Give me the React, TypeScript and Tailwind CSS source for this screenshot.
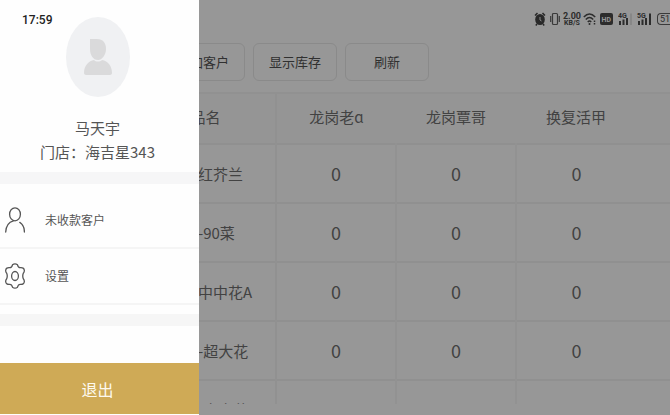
import React from 'react';

interface Product {
  name: string;
  counts: number[];
}

const customers = ['龙岗老ɑ', '龙岗覃哥', '换复活甲'];

const products: Product[] = [
  { name: '红芥兰', counts: [0, 0, 0] },
  { name: '-90菜', counts: [0, 0, 0] },
  { name: '中中花A', counts: [0, 0, 0] },
  { name: '-超大花', counts: [0, 0, 0] },
  { name: '-中中花', counts: [0, 0, 0] },
];

const actions = ['添加客户', '显示库存', '刷新'];

const AvatarIcon = () => (
  <svg viewBox="0 0 64 80" className="w-16 h-20" aria-hidden="true">
    <ellipse cx="32" cy="40" rx="32" ry="40" fill="#f0f1f3" />
    <path
      d="M24 22h7c6 0 9 4 9 10 0 6-4 11-8 11-5 0-8-5-8-11z M18 56c0-8 5-12 10-13 2 2 6 2 8 0 6 1 10 6 10 13 0 1-1 2-2 2H20c-1 0-2-1-2-2z"
      fill="#dadadb"
    />
  </svg>
);

const PersonIcon = () => (
  <svg viewBox="0 0 20 26" className="w-5 h-[26px]" fill="none" stroke="#555" strokeWidth="1.3" strokeLinecap="round" aria-hidden="true">
    <ellipse cx="10" cy="7.3" rx="5.4" ry="6.5" />
    <path d="M8.4 13.8C4 15 1 19 .7 25M14.8 15.4C17.7 17.3 19.4 21 19.4 25" />
  </svg>
);

const GearIcon = () => (
  <svg viewBox="0 0 20 26" className="w-5 h-[26px]" fill="none" stroke="#555" strokeWidth="1.3" strokeLinejoin="round" aria-hidden="true">
    <path d="M7.5 1.8Q10 -.2 12.5 1.8Q13.2 4.7 15.2 4.7Q19 4.3 19.3 7.2Q19.5 9 18.3 10.3Q17.2 13 18.3 15.7Q19.5 17 19.3 18.8Q19 21.7 15.2 21.3Q13.2 21.3 12.5 24.2Q10 26.2 7.5 24.2Q6.8 21.3 4.8 21.3Q1 21.7 .7 18.8Q.5 17 1.7 15.7Q2.8 13 1.7 10.3Q.5 9 .7 7.2Q1 4.3 4.8 4.7Q6.8 4.7 7.5 1.8z" />
    <ellipse cx="10" cy="13" rx="3.4" ry="4.5" />
  </svg>
);

const AlarmIcon = () => (
  <svg viewBox="0 0 12 14" className="w-3 h-3.5 shrink-0" aria-hidden="true">
    <ellipse cx="6" cy="7.5" rx="4.8" ry="5.5" fill="#292929" />
    <path d="M1 3.5 3.5 1M11 3.5 8.5 1M3 12l-1.2 1.5M9 12l1.2 1.5" stroke="#292929" strokeWidth="1.5" />
    <path d="M6 5V8l1.5 1" stroke="#979797" strokeWidth=".9" fill="none" />
  </svg>
);

const VibrateIcon = () => (
  <svg viewBox="0 0 12 14" className="w-3 h-3.5 shrink-0" fill="none" stroke="#3a3a3a" strokeWidth="1.2" aria-hidden="true">
    <rect x="3.5" y="1.5" width="5" height="11" rx="1" />
    <path d="M1.7 4v6M10.3 4v6" />
  </svg>
);

const WifiIcon = () => (
  <svg viewBox="0 0 14 14" className="w-3.5 h-3.5 shrink-0" fill="none" stroke="#2c2c2c" strokeWidth="1.5" aria-hidden="true">
    <path d="M.8 5Q6.5-1 12.2 5M2.8 7.5Q6.5 3.5 10.2 7.5M4.8 10Q6.5 8 8.2 10" />
    <circle cx="6.5" cy="12" r="1" fill="#2c2c2c" stroke="none" />
    <path d="M11.5 8.5v4" strokeDasharray="1.5 1" />
  </svg>
);

const Signal = ({ label, full }: { label: string; full: boolean }) => (
  <svg viewBox="0 0 15 14" className="w-[15px] h-3.5 shrink-0" fill="#2c2c2c" aria-hidden="true">
    <text x="0" y="6" fontSize="7" fontWeight="700" fontFamily="Roboto, sans-serif">{label}</text>
    <path d="M1 9h2v4H1zM4.5 7.5h2V13h-2zM8 6h2v7H8z" />
    <path d="M12 1.5h2V13h-2z" opacity={full ? 1 : 0.15} />
  </svg>
);

const StatusIcons = () => (
  <div className="flex h-[38px] shrink-0 items-center justify-end gap-[3px] overflow-hidden font-[Roboto,sans-serif] text-[#2c2c2c]">
    <AlarmIcon />
    <VibrateIcon />
    <div className="-mx-px flex flex-col items-center font-bold">
      <span className="text-[9px] leading-[8px]">2.00</span>
      <span className="text-[7px] leading-[7px]">KB/S</span>
    </div>
    <WifiIcon />
    <svg viewBox="0 0 13 12" className="w-[13px] h-3 shrink-0" aria-hidden="true">
      <rect width="13" height="12" rx="2" fill="#2c2c2c" />
      <text x="1.5" y="8.5" fontSize="7" fontWeight="700" fill="#979797" fontFamily="Roboto, sans-serif">HD</text>
    </svg>
    <div className="flex gap-1 px-0.5">
      <Signal label="4G" full={false} />
      <Signal label="5G" full />
    </div>
    <div className="h-3 w-[13px] shrink-0 overflow-hidden rounded-l border border-r-0 border-[#3a3a3a] pl-0.5 text-[9px] leading-[10px]">51</div>
  </div>
);

const Drawer = () => (
  <aside className="absolute inset-y-0 left-0 flex w-[199px] flex-col bg-[#fefefe] text-[#555]">
    <time className="absolute left-[22px] top-3 font-[Roboto,sans-serif] text-xs leading-4 font-medium text-[#222]">17:59</time>
    <div className="flex h-[172px] shrink-0 flex-col items-center pr-1 pt-[17px] text-[15px] leading-6">
      <AvatarIcon />
      <p className="mt-[19px]">马天宇</p>
      <p>门店：海吉星343</p>
    </div>
    <div className="h-3 shrink-0 bg-[#f6f6f7]" />
    <nav className="flex flex-col pt-[9px] text-xs">
      <button className="flex h-14 items-center gap-5 border-b-2 border-[#f5f5f5] pl-[5px]">
        <PersonIcon />
        未收款客户
      </button>
      <button className="flex h-14 items-center gap-5 border-b-2 border-[#f5f5f5] pl-[5px]">
        <GearIcon />
        设置
      </button>
    </nav>
    <div className="mt-[9px] h-3 shrink-0 bg-[#f6f6f6]" />
    <button className="mb-px mt-auto h-[51px] shrink-0 bg-[#cfaa56] pr-1 text-base text-[#fdf9ee]">退出</button>
  </aside>
);

const StockTable = () => (
  <div className="min-h-0 flex-1 overflow-hidden border-t-2 border-[#919191]">
    <table className="w-full table-fixed border-collapse text-[15px] leading-6 text-[#424242]">
      <thead>
        <tr className="h-[50px] border-b-2 border-[#909090] bg-[#959595]">
          <th className="w-[276px] border-r-2 border-[#919191] pb-1 pl-[136px] font-normal">品名</th>
          {customers.map((customer) => (
            <th key={customer} className="w-[120px] pb-1 font-normal">{customer}</th>
          ))}
          <th aria-hidden="true" />
        </tr>
      </thead>
      <tbody>
        {products.map((product) => (
          <tr key={product.name} className="h-[59px] border-b-2 border-[#909090]">
            <td className="border-r-2 border-[#919191] pl-[198px] whitespace-nowrap">{product.name}</td>
            {product.counts.map((count, i) => (
              <td key={customers[i]} className="border-r-2 border-[#929292] pb-0.5 text-center text-lg leading-6 last-of-type:border-r-0">{count}</td>
            ))}
          </tr>
        ))}
      </tbody>
    </table>
  </div>
);

export default function App() {
  return (
    <div className="relative flex h-screen flex-col overflow-hidden bg-[#979797] pb-[11px] font-['Noto_Sans_CJK_SC',sans-serif]">
      <StatusIcons />
      <div className="flex shrink-0 gap-2 pb-[11px] pl-[161px] pt-[5px]">
        {actions.map((action) => (
          <button key={action} className="h-[38px] w-[84px] rounded-md border border-[#8a8a8a] text-[13px] text-[#303030]">
            {action}
          </button>
        ))}
      </div>
      <StockTable />
      <Drawer />
    </div>
  );
}
